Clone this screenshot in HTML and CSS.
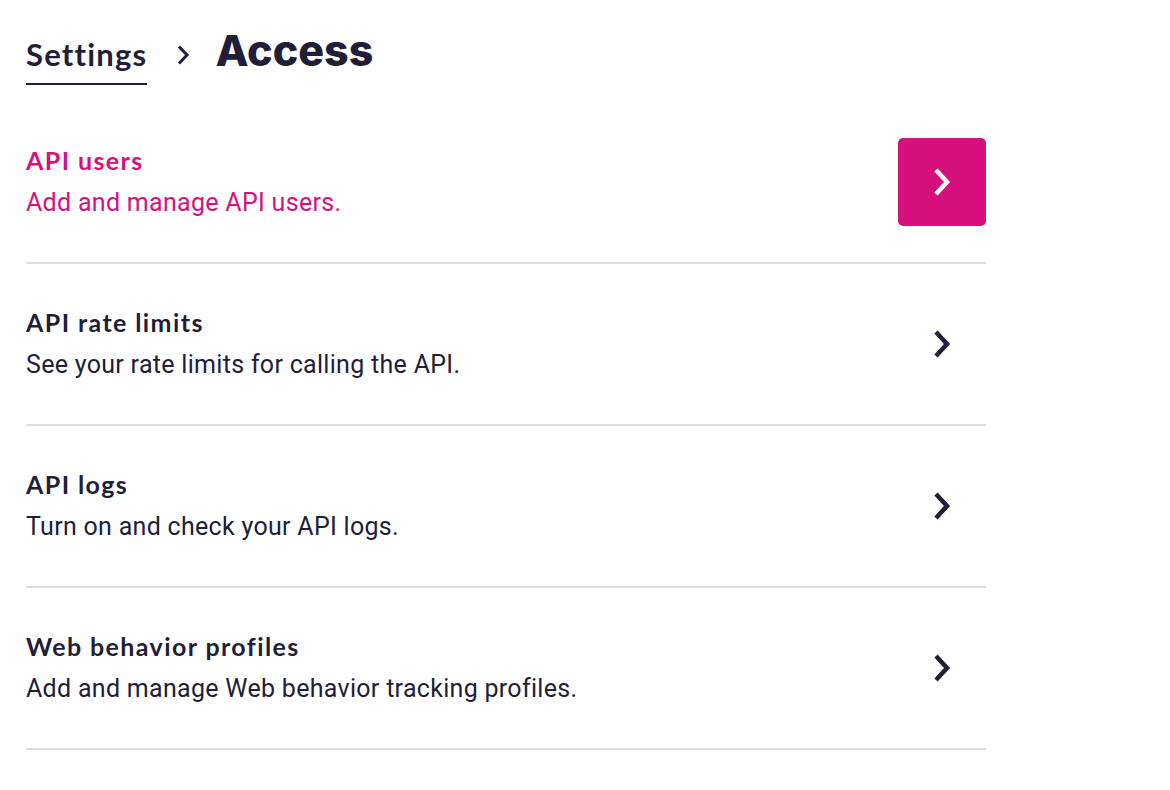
FILE: index.html
```html
<!DOCTYPE html>
<html lang="en">
<head>
<meta charset="utf-8">
<title>Access</title>
<link rel="stylesheet" href="styles.css">
</head>
<body>
<main class="page">
  <nav class="crumbs">
    <a class="crumb-link" href="#">Settings</a>
    <svg class="crumb-sep" width="14" height="22" viewBox="0 0 14 22" aria-hidden="true"><path d="M3 2.5 L11 11 L3 19.5" fill="none" stroke="#221d38" stroke-width="3"/></svg>
    <h1 class="crumb-current">Access</h1>
  </nav>
  <ul class="list">
    <li class="row row-active">
      <div class="row-text">
        <div class="row-title">API users</div>
        <div class="row-desc">Add and manage API users.</div>
      </div>
      <span class="row-btn">
        <svg width="20" height="32" viewBox="0 0 20 32" aria-hidden="true"><path d="M4 4 L15 16 L4 28" fill="none" stroke="#fff" stroke-width="4.5"/></svg>
      </span>
    </li>
    <li class="row">
      <div class="row-text">
        <div class="row-title">API rate limits</div>
        <div class="row-desc">See your rate limits for calling the API.</div>
      </div>
      <span class="row-btn">
        <svg width="20" height="32" viewBox="0 0 20 32" aria-hidden="true"><path d="M4 4 L15 16 L4 28" fill="none" stroke="#221d38" stroke-width="4.5"/></svg>
      </span>
    </li>
    <li class="row">
      <div class="row-text">
        <div class="row-title">API logs</div>
        <div class="row-desc">Turn on and check your API logs.</div>
      </div>
      <span class="row-btn">
        <svg width="20" height="32" viewBox="0 0 20 32" aria-hidden="true"><path d="M4 4 L15 16 L4 28" fill="none" stroke="#221d38" stroke-width="4.5"/></svg>
      </span>
    </li>
    <li class="row">
      <div class="row-text">
        <div class="row-title">Web behavior profiles</div>
        <div class="row-desc">Add and manage Web behavior tracking profiles.</div>
      </div>
      <span class="row-btn">
        <svg width="20" height="32" viewBox="0 0 20 32" aria-hidden="true"><path d="M4 4 L15 16 L4 28" fill="none" stroke="#221d38" stroke-width="4.5"/></svg>
      </span>
    </li>
  </ul>
</main>
</body>
</html>
```
FILE: styles.css
```css
html, body {
  margin: 0;
  padding: 0;
  background: #fff;
  color: #221d38;
}
.page {
  width: 960px;
  padding: 30px 0 0 26px;
}
.crumbs {
  display: flex;
  align-items: baseline;
  height: 72px;
}
.crumb-link {
  font-family: "Lato", sans-serif;
  font-weight: 700;
  font-size: 31px;
  letter-spacing: 1.2px;
  line-height: 40px;
  color: #221d38;
  text-decoration: none;
  border-bottom: 2px solid #221d38;
  padding-bottom: 9px;
}
.crumb-sep {
  margin: 0 25px 0 29px;
}
.crumb-current {
  margin: 0;
  font-family: "Inter", sans-serif;
  font-weight: 800;
  font-size: 43px;
  line-height: 40px;
}
.list {
  list-style: none;
  margin: 0;
  padding: 0;
}
.row {
  display: flex;
  align-items: center;
  justify-content: space-between;
  min-height: 88px;
  padding: 36px 0;
  border-bottom: 2px solid #dddddd;
}
.row-title {
  font-family: "Lato", sans-serif;
  font-weight: 700;
  font-size: 25px;
  letter-spacing: 1.4px;
  line-height: 30px;
}
.row-desc {
  font-family: "Roboto", sans-serif;
  font-size: 25px;
  letter-spacing: 0.3px;
  line-height: 32px;
  margin-top: 12px;
}
.row-active .row-title,
.row-active .row-desc {
  color: #d6117e;
}
.row-btn {
  width: 88px;
  height: 88px;
  border-radius: 5px;
  display: flex;
  align-items: center;
  justify-content: center;
}
.row-active .row-btn {
  background: #d6117e;
}
```
